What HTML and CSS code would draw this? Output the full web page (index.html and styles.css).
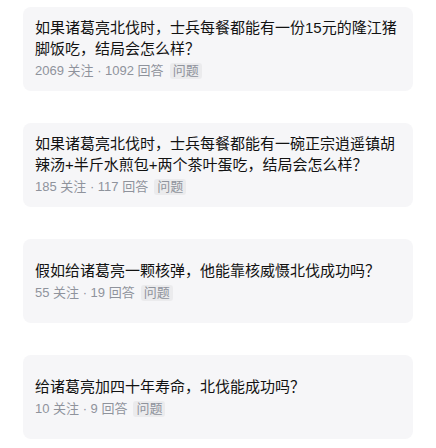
FILE: index.html
```html
<!DOCTYPE html>
<html lang="zh-CN">

<head>
    <meta charset="UTF-8">
    <title>北伐问题</title>
    <link rel="stylesheet" href="styles.css">
</head>

<body>
    <div class="questionList">
        <div class="questionCard">
            <div class="questionTitle">如果诸葛亮北伐时，士兵每餐都能有一份15元的隆江猪脚饭吃，结局会怎么样？</div>
            <div class="questionMeta">
                <span>2069 关注 · 1092 回答</span>
                <span class="questionTag">问题</span>
            </div>
        </div>
        <div class="questionCard">
            <div class="questionTitle">如果诸葛亮北伐时，士兵每餐都能有一碗正宗逍遥镇胡辣汤+半斤水煎包+两个茶叶蛋吃，结局会怎么样？</div>
            <div class="questionMeta">
                <span>185 关注 · 117 回答</span>
                <span class="questionTag">问题</span>
            </div>
        </div>
        <div class="questionCard">
            <div class="questionTitle">假如给诸葛亮一颗核弹，他能靠核威慑北伐成功吗？</div>
            <div class="questionMeta">
                <span>55 关注 · 19 回答</span>
                <span class="questionTag">问题</span>
            </div>
        </div>
        <div class="questionCard">
            <div class="questionTitle">给诸葛亮加四十年寿命，北伐能成功吗？</div>
            <div class="questionMeta">
                <span>10 关注 · 9 回答</span>
                <span class="questionTag">问题</span>
            </div>
        </div>
    </div>
</body>

</html>
```

FILE: styles.css
```css
body { margin: 0; padding: 0; background-color: #fff; font-family: "Liberation Sans", Arial, "Noto Sans CJK SC", sans-serif; }
.questionList { display: flex; flex-direction: column; gap: 32px; padding: 7px 23px; }
.questionCard {
    display: flex;
    flex-direction: column;
    justify-content: center;
    min-height: 84px;
    box-sizing: border-box;
    padding: 10px 12px;
    background-color: #f6f6f8;
    border-radius: 8px;
}
.questionTitle { font-size: 15px; line-height: 21px; color: #121212; }
.questionMeta { display: flex; align-items: center; gap: 6px; margin-top: 2px; font-size: 13px; line-height: 20px; color: #8f939c; }
.questionTag { background-color: #ebebed; border-radius: 3px; padding: 0 3px; line-height: 16px; }
```
